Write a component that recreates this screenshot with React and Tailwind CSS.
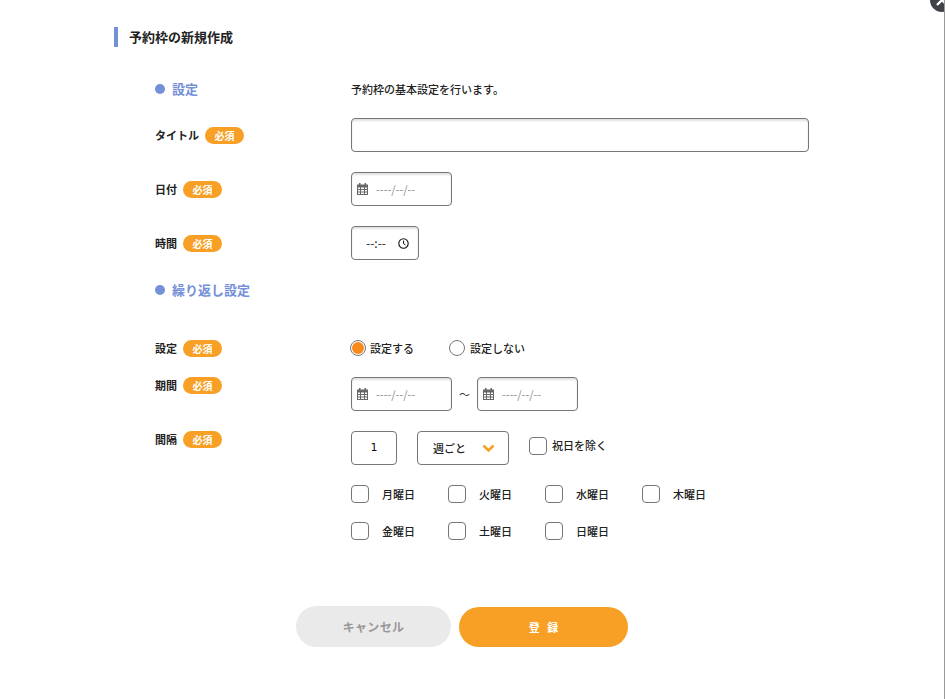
import React from 'react';

const font = { fontFamily: '"Noto Sans CJK JP", "Noto Sans", sans-serif' };

const Required = () => (
  <span className="flex h-[17px] w-[39px] items-center justify-center rounded-full bg-[#f7a025] text-[10px] font-bold text-white">
    必須
  </span>
);

const CalendarIcon = () => (
  <svg width="11" height="12" viewBox="0 0 11 12" className="shrink-0">
    <path fill="#666" d="M2 0h1.5v1.5h4V0H9v1.5h2V12H0V1.5h2zM1 4.5v1.6h2V4.5zm3 0v1.6h3V4.5zm4 0v1.6h2V4.5zM1 7v1.6h2V7zm3 0v1.6h3V7zm4 0v1.6h2V7zM1 9.5V11h2V9.5zm3 0V11h3V9.5zm4 0V11h2V9.5z" />
  </svg>
);

const DateBox = () => (
  <div className="flex h-[34px] w-[101px] items-center gap-[8px] rounded-[4px] border border-[#767676] pl-[5px] text-[11px] text-[#8a8a8a] shadow-[inset_0_2px_2px_rgba(0,0,0,0.12)]">
    <CalendarIcon />
    <span>----/--/--</span>
  </div>
);

const Check = () => (
  <span className="block h-[18px] w-[18px] shrink-0 rounded-[4px] border border-[#767676]" />
);

const Day = ({ label }) => (
  <div className="flex w-[97px] items-center gap-[13px] text-[11px] font-medium text-[#222]">
    <Check />
    <span>{label}</span>
  </div>
);

const Section = ({ label, className }) => (
  <div className={`flex items-center gap-[7px] text-[13px] font-bold text-[#7490d9] ${className}`}>
    <span className="h-[10px] w-[10px] rounded-full bg-[#7490d9]" />
    {label}
  </div>
);

const Label = ({ text }) => (
  <div className="flex w-[196px] shrink-0 items-center gap-[6px] text-[11px] font-bold text-[#222]">
    <span>{text}</span>
    <Required />
  </div>
);

export default function App() {
  return (
    <div className="relative h-[699px] w-[945px] overflow-hidden border-r border-[#999] bg-white" style={font}>
      <button className="absolute right-[-10px] top-[-12px] flex h-[24px] w-[24px] items-center justify-center rounded-full bg-[#3f4347]">
        <svg width="12" height="12" viewBox="0 0 12 12">
          <path d="M1 11 11 1M1 1l10 10" stroke="#fff" strokeWidth="2.4" />
        </svg>
      </button>

      <h1 className="ml-[114px] mt-[27px] flex h-[20px] items-center border-l-4 border-[#7490d9] pl-[11px] text-[13px] font-bold text-[#222]">
        予約枠の新規作成
      </h1>

      <div className="ml-[155px] mt-[31px] w-[654px]">
        <div className="flex h-[22px] items-center">
          <Section label="設定" className="w-[196px]" />
          <p className="text-[11px] font-medium text-[#222]">予約枠の基本設定を行います。</p>
        </div>

        <div className="mt-[18px] flex h-[34px] items-center">
          <Label text="タイトル" />
          <div className="h-[34px] w-[458px] rounded-[4px] border border-[#767676] shadow-[inset_0_2px_2px_rgba(0,0,0,0.12)]" />
        </div>

        <div className="mt-[20px] flex h-[34px] items-center">
          <Label text="日付" />
          <DateBox />
        </div>

        <div className="mt-[20px] flex h-[34px] items-center">
          <Label text="時間" />
          <div className="flex h-[34px] w-[68px] items-center rounded-[4px] border border-[#767676] pl-[14px] text-[12px] text-[#222] shadow-[inset_0_2px_2px_rgba(0,0,0,0.12)]">
            <span className="w-[32px]">--:--</span>
            <svg width="11" height="11" viewBox="0 0 11 11">
              <circle cx="5.5" cy="5.5" r="4.7" fill="none" stroke="#111" strokeWidth="1.1" />
              <path d="M5.5 2.6v3l2 1.4" fill="none" stroke="#111" strokeWidth="1" />
            </svg>
          </div>
        </div>

        <Section label="繰り返し設定" className="mt-[20px] h-[20px]" />

        <div className="mt-[38px] flex h-[20px] items-center">
          <Label text="設定" />
          <div className="-ml-[1px] flex items-center text-[11px] font-medium text-[#222]">
            <span className="flex h-[16px] w-[16px] items-center justify-center rounded-full border border-[#767676]">
              <span className="h-[12px] w-[12px] rounded-full bg-[#f98a1e]" />
            </span>
            <span className="ml-[4px] w-[79px]">設定する</span>
            <span className="h-[16px] w-[16px] rounded-full border border-[#767676]" />
            <span className="ml-[5px]">設定しない</span>
          </div>
        </div>

        <div className="mt-[19px] flex h-[34px]">
          <div className="flex h-[17px] items-start">
            <Label text="期間" />
          </div>
          <div className="flex items-center">
            <DateBox />
            <span className="w-[25px] text-center text-[11px] text-[#333]">〜</span>
            <DateBox />
          </div>
        </div>

        <div className="mt-[20px] flex">
          <div className="flex h-[17px] items-start">
            <Label text="間隔" />
          </div>
          <div>
            <div className="flex items-center">
              <div className="flex h-[34px] w-[46px] items-center justify-center rounded-[4px] border border-[#767676] font-['DejaVu_Sans'] text-[11px] text-[#111]">
                1
              </div>
              <div className="ml-[20px] flex h-[34px] w-[92px] items-center rounded-[4px] border border-[#767676] pl-[15px] text-[11px] font-medium text-[#222]">
                <span className="w-[49px]">週ごと</span>
                <svg width="13" height="9" viewBox="0 0 13 9">
                  <path d="M1.5 1.5 6.5 6.5 11.5 1.5" fill="none" stroke="#f7a025" strokeWidth="2.6" />
                </svg>
              </div>
              <div className="mb-[5px] ml-[20px] flex items-center gap-[5px] text-[11px] font-medium text-[#222]">
                <Check />
                <span>祝日を除く</span>
              </div>
            </div>
            <div className="mt-[20px] flex h-[18px] items-center">
              <Day label="月曜日" />
              <Day label="火曜日" />
              <Day label="水曜日" />
              <Day label="木曜日" />
            </div>
            <div className="mt-[19px] flex h-[18px] items-center">
              <Day label="金曜日" />
              <Day label="土曜日" />
              <Day label="日曜日" />
            </div>
          </div>
        </div>
      </div>

      <div className="ml-[296px] mt-[66px] flex items-end gap-[8px]">
        <button className="h-[41px] w-[155px] rounded-full bg-[#eaeaea] text-[12px] font-bold tracking-[0.3px] text-[#999]">
          キャンセル
        </button>
        <button className="h-[40px] w-[169px] rounded-full bg-[#f7a025] text-[11px] font-bold text-white">
          登&nbsp;&nbsp;&nbsp;録
        </button>
      </div>
    </div>
  );
}
